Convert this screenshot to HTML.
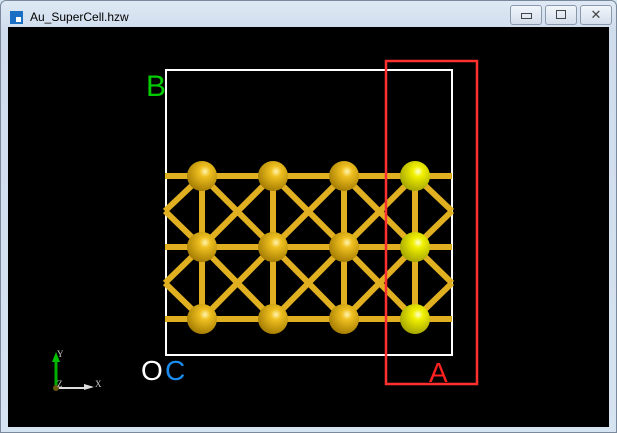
<!DOCTYPE html>
<html><head><style>
body{margin:0;width:617px;height:433px;overflow:hidden;background:#d6e3f0;font-family:"Liberation Sans",sans-serif;}
.frame{position:absolute;left:0;top:0;width:615px;height:431px;border:1px solid #7a8a9c;border-radius:6px 6px 0 0;background:linear-gradient(#dfe9f5,#cfdcec 30px,#d6e3f0);}
.title{position:absolute;left:30px;top:10px;font-size:12px;color:#000;}
.ico{position:absolute;left:10px;top:11px;width:13px;height:13px;background:#1a6fc4;}
.ico:after{content:"";position:absolute;left:6px;top:6px;width:5px;height:5px;background:#fff;}
.btn{position:absolute;top:5px;height:18px;border:1px solid #8a99ab;border-radius:3px;background:linear-gradient(#f2f6fb,#d3deeb);}
.view{position:absolute;left:8px;top:27px;width:601px;height:400px;background:#000;}
</style></head><body>
<div class="frame"></div>
<div class="ico"></div>
<div class="title">Au_SuperCell.hzw</div>
<div class="btn" style="left:510px;width:30px"><div style="position:absolute;left:10px;top:7px;width:9px;height:4px;border:1px solid #444"></div></div>
<div class="btn" style="left:545px;width:30px"><div style="position:absolute;left:10px;top:4px;width:8px;height:7px;border:1px solid #444"></div></div>
<div class="btn" style="left:580px;width:30px;font-size:13px;text-align:center;line-height:18px;color:#444">✕</div>
<div class="view">
<svg width="601" height="400" viewBox="8 27 601 400" xmlns="http://www.w3.org/2000/svg">
<defs>
<radialGradient id="g" cx="0.6" cy="0.35" r="0.7"><stop offset="0" stop-color="#fff6b0"/><stop offset="0.25" stop-color="#f0c020"/><stop offset="1" stop-color="#a07800"/></radialGradient>
<radialGradient id="y" cx="0.6" cy="0.35" r="0.7"><stop offset="0" stop-color="#ffffd0"/><stop offset="0.25" stop-color="#f0f000"/><stop offset="1" stop-color="#a0a000"/></radialGradient>
</defs>
<rect x="166" y="70" width="286" height="285" fill="none" stroke="#fff" stroke-width="2"/>
<g stroke="#e0b020" stroke-width="6">
<line x1="165" y1="176" x2="452" y2="176"/><line x1="165" y1="247" x2="452" y2="247"/><line x1="165" y1="319" x2="452" y2="319"/>
<line x1="202" y1="176" x2="202" y2="319"/><line x1="273" y1="176" x2="273" y2="319"/><line x1="344" y1="176" x2="344" y2="319"/><line x1="415" y1="176" x2="415" y2="319"/>
<path d="M202 176L273 247L344 176L415 247L452 211M202 247L273 176L344 247L415 176L452 211M202 247L273 319L344 247L415 319L452 283M202 319L273 247L344 319L415 247L452 283M165 211L202 176M165 211L202 247M165 283L202 247M165 283L202 319" fill="none"/>
</g>
<g fill="url(#g)">
<circle cx="202" cy="176" r="15"/><circle cx="273" cy="176" r="15"/><circle cx="344" cy="176" r="15"/>
<circle cx="202" cy="247" r="15"/><circle cx="273" cy="247" r="15"/><circle cx="344" cy="247" r="15"/>
<circle cx="202" cy="319" r="15"/><circle cx="273" cy="319" r="15"/><circle cx="344" cy="319" r="15"/>
</g>
<g fill="url(#y)"><circle cx="415" cy="176" r="15"/><circle cx="415" cy="247" r="15"/><circle cx="415" cy="319" r="15"/></g>
<rect x="386" y="61" width="91" height="323" fill="none" stroke="#ff3030" stroke-width="2.5"/>
<text x="146" y="96" fill="#00cc00" font-size="30" font-family="Liberation Sans">B</text>
<text x="141" y="380" fill="#fff" font-size="28" font-family="Liberation Sans">O</text>
<text x="165" y="380" fill="#1a8cf0" font-size="28" font-family="Liberation Sans">C</text>
<text x="429" y="382" fill="#ff2020" font-size="28" font-family="Liberation Sans">A</text>
<line x1="56" y1="386" x2="56" y2="360" stroke="#00b000" stroke-width="3"/>
<polygon points="52,362 60,362 56,352" fill="#00c000"/>
<line x1="56" y1="388" x2="86" y2="388" stroke="#ddd" stroke-width="2"/>
<polygon points="84,384 94,387 84,390" fill="#ddd"/>
<circle cx="56" cy="388" r="3" fill="#6a5a10"/>
<text x="57" y="357" fill="#ccc" font-size="9" font-family="Liberation Serif">Y</text>
<text x="57" y="387" fill="#ccc" font-size="9" font-family="Liberation Serif">Z</text>
<text x="95" y="387" fill="#ccc" font-size="9" font-family="Liberation Serif">X</text>
</svg>
</div>
</body></html>
